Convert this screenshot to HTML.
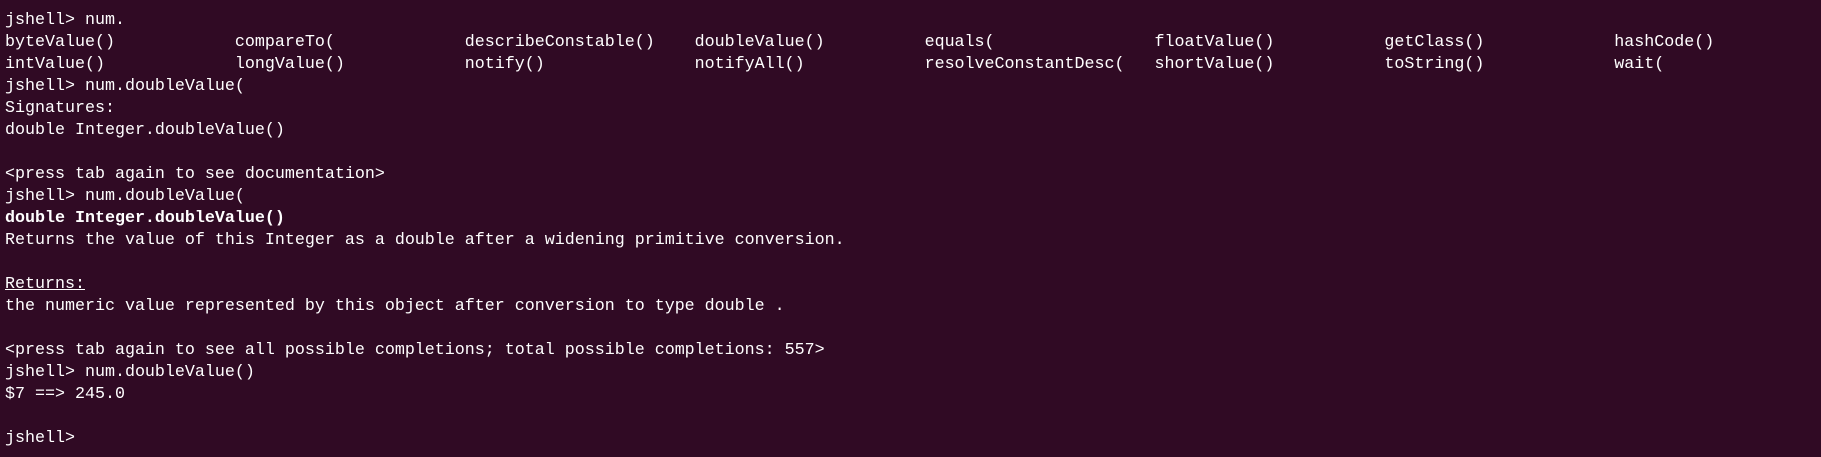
<!DOCTYPE html>
<html><head><meta charset="utf-8"><style>
html,body{margin:0;padding:0;background:#300a24;width:1821px;height:457px;overflow:hidden}
pre{margin:0;position:absolute;left:5px;top:10px;font-family:"Liberation Mono","DejaVu Sans Mono",monospace;font-size:16.67px;line-height:22px;color:#ffffff;white-space:pre}
b{font-weight:bold}
u{text-decoration:underline}
</style></head><body><pre>jshell&gt; num.
byteValue()            compareTo(             describeConstable()    doubleValue()          equals(                floatValue()           getClass()             hashCode()
intValue()             longValue()            notify()               notifyAll()            resolveConstantDesc(   shortValue()           toString()             wait(
jshell&gt; num.doubleValue(
Signatures:
double Integer.doubleValue()

&lt;press tab again to see documentation&gt;
jshell&gt; num.doubleValue(
<b>double Integer.doubleValue()</b>
Returns the value of this Integer as a double after a widening primitive conversion.

<u>Returns:</u>
the numeric value represented by this object after conversion to type double .

&lt;press tab again to see all possible completions; total possible completions: 557&gt;
jshell&gt; num.doubleValue()
$7 ==&gt; 245.0

jshell&gt; </pre></body></html>
